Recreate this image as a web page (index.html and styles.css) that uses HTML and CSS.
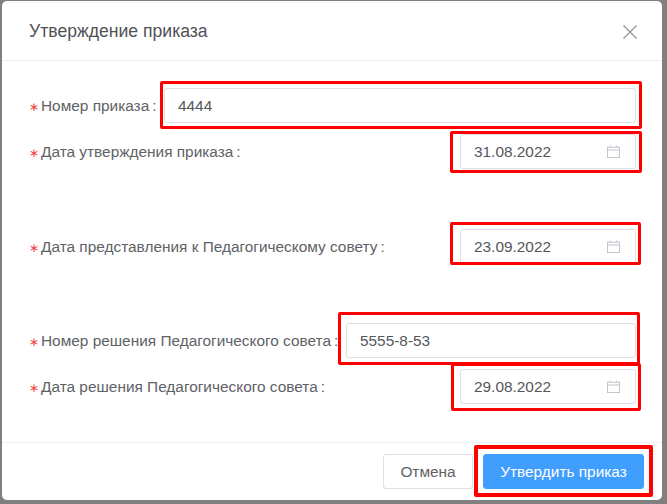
FILE: index.html
```html
<!DOCTYPE html>
<html lang="ru">
<head>
  <meta charset="UTF-8">
  <meta name="viewport" content="width=device-width, initial-scale=1.0">
  <title>Утверждение приказа</title>
  <link rel="stylesheet" href="styles.css">
</head>
<body>

  <div class="modal">
    <div class="modal-header">
      <h3>Утверждение приказа</h3>
      <svg class="close-icon" viewBox="0 0 14 14"><path d="M0.5 0.5 L13.5 13.5 M13.5 0.5 L0.5 13.5"/></svg>
    </div>

    <div class="modal-body">
      <div class="field">
        <label><span class="req">∗</span>Номер приказа<span class="colon">:</span></label>
        <div class="control control-first">
          <span class="mark mark-number"></span>
          <div class="input">4444</div>
        </div>
      </div>

      <div class="field">
        <label><span class="req">∗</span>Дата утверждения приказа<span class="colon">:</span></label>
        <div class="control control-date">
          <span class="mark mark-date-one"></span>
          <div class="input">31.08.2022
            <svg class="cal-icon" viewBox="0 0 14 14"><path d="M0.5 2.5 H13.5 V13.5 H0.5 Z M0.5 5.5 H13.5 M3.5 0.5 V2.5 M10.5 0.5 V2.5"/></svg>
          </div>
        </div>
      </div>

      <div class="field field-apart">
        <label><span class="req">∗</span>Дата представления к Педагогическому совету<span class="colon">:</span></label>
        <div class="control control-date">
          <span class="mark mark-date-two"></span>
          <div class="input">23.09.2022
            <svg class="cal-icon" viewBox="0 0 14 14"><path d="M0.5 2.5 H13.5 V13.5 H0.5 Z M0.5 5.5 H13.5 M3.5 0.5 V2.5 M10.5 0.5 V2.5"/></svg>
          </div>
        </div>
      </div>

      <div class="field field-decision">
        <label><span class="req">∗</span>Номер решения Педагогического совета<span class="colon">:</span></label>
        <div class="control control-wide">
          <span class="mark mark-decision"></span>
          <div class="input">5555-8-53</div>
        </div>
      </div>

      <div class="field">
        <label><span class="req">∗</span>Дата решения Педагогического совета<span class="colon">:</span></label>
        <div class="control control-date">
          <span class="mark mark-date-three"></span>
          <div class="input">29.08.2022
            <svg class="cal-icon" viewBox="0 0 14 14"><path d="M0.5 2.5 H13.5 V13.5 H0.5 Z M0.5 5.5 H13.5 M3.5 0.5 V2.5 M10.5 0.5 V2.5"/></svg>
          </div>
        </div>
      </div>
    </div>

    <div class="modal-footer">
      <button class="btn">Отмена</button>
      <button class="btn btn-primary">
        <span class="mark mark-submit"></span>
        Утвердить приказ
      </button>
    </div>
  </div>

</body>
</html>
```

FILE: styles.css
```css
* {
  margin: 0;
  padding: 0;
  box-sizing: border-box;
}

body {
  font-family: "Liberation Sans", Arial, sans-serif;
  background-color: #808080;
  color: #606266;
  font-size: 15.4px;
  height: 504px;
  overflow: hidden;
}

.modal {
  width: 660px;
  height: 499px;
  margin: 1px 0 0 2px;
  background-color: #fff;
  border-radius: 5px;
  display: flex;
  flex-direction: column;
}

.modal-header {
  height: 60px;
  flex-shrink: 0;
  padding: 2px 25px 0 27px;
  border-bottom: 1px solid #ebeef5;
  display: flex;
  justify-content: space-between;
  align-items: center;
}

.modal-header h3 {
  font-size: 17.6px;
  font-weight: normal;
  color: #505256;
}

.close-icon {
  width: 14px;
  height: 14px;
  fill: none;
  stroke: #909399;
  stroke-width: 1.2;
}

.modal-body {
  flex: 1;
  padding: 27px 26px 0 26px;
}

.field {
  display: flex;
  justify-content: space-between;
  align-items: center;
  margin-bottom: 11px;
}

.field-apart {
  margin-top: 60px;
}

.field-decision {
  margin-top: 59px;
}

label {
  white-space: nowrap;
}

.req {
  display: inline-block;
  width: 13px;
  font-size: 12px;
  padding-left: 1px;
  color: #f23c3c;
}

.colon {
  margin-left: 3px;
}

.control {
  position: relative;
}

.control-first {
  width: 472px;
}

.control-date {
  width: 176px;
}

.control-wide {
  width: 290px;
}

.input {
  height: 35px;
  padding: 0 15px 0 13px;
  border: 1px solid #dcdfe6;
  border-radius: 3px;
  display: flex;
  justify-content: space-between;
  align-items: center;
  color: #55575b;
}

.cal-icon {
  width: 13px;
  height: 13px;
  fill: none;
  stroke: #c0c4cc;
  stroke-width: 1.1;
}

/* red annotation frames on top of the form */
.mark {
  position: absolute;
  border: 3px solid #f00;
  border-radius: 2px;
  pointer-events: none;
}

.mark-number {
  top: -7px;
  bottom: -6px;
  left: -4px;
  right: -6px;
}

.mark-date-one {
  top: -3px;
  bottom: -4px;
  left: -10px;
  right: -6px;
}

.mark-date-two {
  top: -7px;
  bottom: -1px;
  left: -10px;
  right: -5px;
}

.mark-decision {
  top: -11px;
  bottom: -7px;
  left: -8px;
  right: -4px;
}

.mark-date-three {
  top: -6px;
  bottom: -7px;
  left: -9px;
  right: -5px;
}

.modal-footer {
  height: 58px;
  flex-shrink: 0;
  border-top: 1px solid #ebeef5;
  padding: 11px 18px 0 0;
  display: flex;
  justify-content: flex-end;
  gap: 10px;
}

.btn {
  position: relative;
  height: 35px;
  width: 90px;
  background-color: #fff;
  border: 1px solid #dcdfe6;
  border-radius: 3px;
  font-family: inherit;
  font-size: 15.4px;
  color: #606266;
}

.btn-primary {
  width: 161px;
  background-color: #409eff;
  border-color: #409eff;
  color: #fff;
}

.mark-submit {
  top: -10px;
  bottom: -9px;
  left: -10px;
  right: -10px;
  border-width: 4px;
}
```
